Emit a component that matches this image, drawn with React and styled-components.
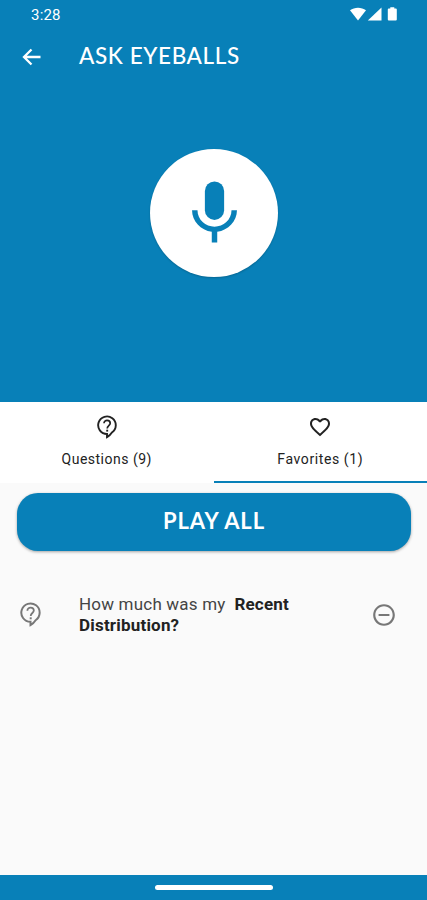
import React from "react";
import styled, { createGlobalStyle } from "styled-components";
import { MdFavoriteBorder, MdRemoveCircleOutline } from "react-icons/md";

const colors = {
  primary: "#0880b8",
  surface: "#fafafa",
  white: "#ffffff",
  text: "#222222",
  muted: "#777777",
};

export default function App() {
  return (
    <Screen>
      <GlobalStyle />
      <Hero>
        <StatusBar>
          <Clock>3:28</Clock>
          <StatusIcons />
        </StatusBar>
        <AppBar>
          <BackIcon />
          <Title>ASK EYEBALLS</Title>
        </AppBar>
        <MicButton aria-label="Ask a question">
          <MicIcon />
        </MicButton>
      </Hero>
      <Tabs>
        <Tab>
          <SupportIcon size={24} />
          <TabLabel $spacing="0.5px">Questions (9)</TabLabel>
        </Tab>
        <Tab $active>
          <MdFavoriteBorder size={24} />
          <TabLabel $spacing="0.6px">Favorites (1)</TabLabel>
        </Tab>
      </Tabs>
      <Content>
        <PlayButton>PLAY ALL</PlayButton>
        <QuestionRow>
          <SupportIcon size={25} />
          <Question>
            <span>
              How much was my&nbsp; <b>Recent</b>
            </span>
            <b>Distribution?</b>
          </Question>
          <MdRemoveCircleOutline size={26} />
        </QuestionRow>
      </Content>
      <NavBar>
        <NavHandle />
      </NavBar>
    </Screen>
  );
}

function StatusIcons() {
  return (
    <svg width="50" height="16" viewBox="0 0 50 16" fill="#fff">
      <path d="M0 3.3C4.5-.1 11.5-.1 16 3.3L8 13.5z" />
      <path d="M31.500.5v13H17.800z" />
      <path d="M40.3 1.5V.3h4v1.200h1.500q1 0 1 1v10q0 1-1 1h-7q-1 0-1-1v-10q0-1 1-1z" />
    </svg>
  );
}

function BackIcon() {
  return (
    <svg width="20" height="20" viewBox="0 0 20 20" fill="none" stroke="#fff" strokeWidth="2.3">
      <path d="M10.500 2.500 3 10l7.500 7.500M3.200 10H19.500" />
    </svg>
  );
}

function MicIcon() {
  return (
    <svg width="77" height="77" viewBox="0 0 24 24" fill={colors.primary}>
      <rect x="9" y="2" width="6" height="12" rx="3" />
      <path d="M17.3 11c0 3-2.540 5.100-5.300 5.100S6.700 14 6.700 11H5c0 3.410 2.720 6.230 6.150 6.720V21h1.700v-3.280C16.280 17.240 19 14.420 19 11z" />
    </svg>
  );
}

// question mark in a round bubble with its tail at the bottom centre
function SupportIcon({ size }) {
  return (
    <svg width={size} height={size} viewBox="0 0 24 24" fill="none" stroke="currentColor">
      <path
        strokeWidth="1.9"
        d="M12 19a8.800 8.800 0 1 1 4.900-1.500C15.700 19.400 14.200 20.900 12 22.200z"
      />
      <path strokeWidth="1.700" d="M9 8.300c0-4 6.200-3.600 6.200-.1 0 2.300-3 2.500-3 5.200" />
      <path strokeWidth="1.900" d="M12.200 14.700v1.900" />
    </svg>
  );
}

const GlobalStyle = createGlobalStyle`
  * {
    box-sizing: border-box;
  }
  body {
    margin: 0;
    font-family: Roboto, "Liberation Sans", sans-serif;
  }
  svg {
    display: block;
    flex-shrink: 0;
  }
  button {
    border: 0;
    padding: 0;
  }
`;

const Screen = styled.div`
  display: flex;
  flex-direction: column;
  width: 427px;
  height: 900px;
  overflow: hidden;
  background: ${colors.surface};
`;

const Hero = styled.header`
  display: flex;
  flex-direction: column;
  align-items: center;
  height: 402px;
  color: ${colors.white};
  background: ${colors.primary};
`;

const StatusBar = styled.div`
  display: flex;
  justify-content: space-between;
  align-self: stretch;
  height: 30px;
  padding: 7px 27px 0 31px;
`;

const Clock = styled.span`
  font-size: 15px;
  line-height: 16px;
  letter-spacing: 0.2px;
`;

const AppBar = styled.div`
  display: flex;
  align-items: center;
  align-self: stretch;
  gap: 38px;
  height: 54px;
  padding-left: 21px;
`;

const Title = styled.h1`
  margin: 0;
  padding-bottom: 4px;
  font-family: Lato, "Liberation Sans", sans-serif;
  font-size: 22.5px;
  font-weight: 500;
  letter-spacing: 0.6px;
`;

const MicButton = styled.button`
  display: flex;
  align-items: center;
  justify-content: center;
  width: 128px;
  height: 128px;
  margin: 65px 0 0 1px;
  border-radius: 50%;
  background: ${colors.white};
  box-shadow: 0 1px 2px rgba(0, 0, 0, 0.2);
`;

const Tabs = styled.nav`
  display: flex;
  height: 81px;
  background: ${colors.white};
`;

const Tab = styled.div`
  display: flex;
  flex: 1;
  flex-direction: column;
  align-items: center;
  padding-top: 13px;
  color: ${colors.text};
  border-bottom: 2px solid ${(p) => (p.$active ? colors.primary : "transparent")};
`;

const TabLabel = styled.span`
  margin-top: 11px;
  font-size: 14px;
  line-height: 18px;
  letter-spacing: ${(p) => p.$spacing};
`;

const Content = styled.main`
  flex: 1;
  padding: 10px 16px 0 17px;
`;

const PlayButton = styled.button`
  display: block;
  width: 100%;
  height: 58px;
  padding-bottom: 3px;
  border-radius: 21px;
  color: ${colors.white};
  background: ${colors.primary};
  box-shadow: 0 1px 3px rgba(0, 0, 0, 0.35);
  font-family: Lato, "Liberation Sans", sans-serif;
  font-size: 22px;
  font-weight: 700;
  letter-spacing: 0.9px;
`;

const QuestionRow = styled.div`
  display: flex;
  align-items: center;
  margin-top: 43px;
  padding: 0 14px 0 1px;
  color: ${colors.muted};
`;

const Question = styled.p`
  display: flex;
  flex-direction: column;
  margin: 0 auto 0 36px;
  color: #444;
  font-size: 17px;
  line-height: 20.5px;
  letter-spacing: 0.2px;

  b {
    color: ${colors.text};
    font-weight: 700;
  }
`;

const NavBar = styled.footer`
  display: flex;
  justify-content: center;
  height: 25px;
  padding-top: 10px;
  background: ${colors.primary};
`;

const NavHandle = styled.div`
  width: 118px;
  height: 5px;
  border-radius: 3px;
  background: ${colors.white};
`;
